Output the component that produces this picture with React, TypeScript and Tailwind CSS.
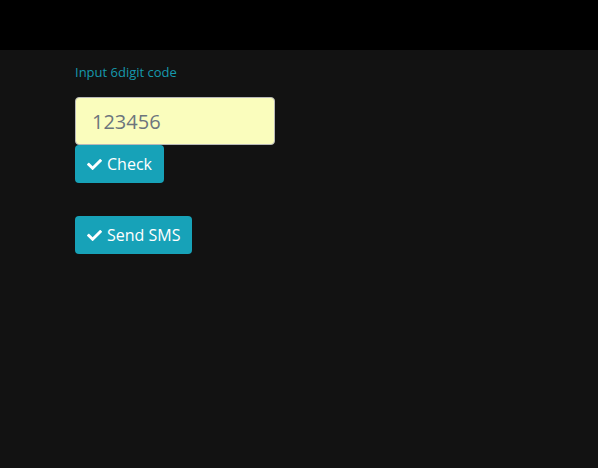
import { FaCheck } from "react-icons/fa";

export default function App() {
  return (
    <div className="w-[598px] h-[468px] bg-[#121212] font-['Open_Sans','Noto_Sans',sans-serif]">
      <div className="h-[50px] bg-black" />
      <div className="pl-[75px] pt-[13px]">
        <label className="block text-[13px] leading-[18px] text-[#1699ad]">Input 6digit code</label>
        <input
          defaultValue="123456"
          className="mt-[16px] block w-[200px] h-[48px] rounded-[4px] border border-[#b8b8b8] bg-[#fafdbd] px-[16px] text-[20px] text-[#6c757d] outline-none"
        />
        <button className="flex items-center gap-[5px] h-[38px] px-[12px] rounded-[4px] bg-[#17a2b8] text-white text-[16px]">
          <FaCheck className="w-[15px] h-[15px]" />
          Check
        </button>
        <button className="mt-[33px] flex items-center gap-[5px] h-[38px] px-[12px] rounded-[4px] bg-[#17a2b8] text-white text-[16px]">
          <FaCheck className="w-[15px] h-[15px]" />
          Send SMS
        </button>
      </div>
    </div>
  );
}
